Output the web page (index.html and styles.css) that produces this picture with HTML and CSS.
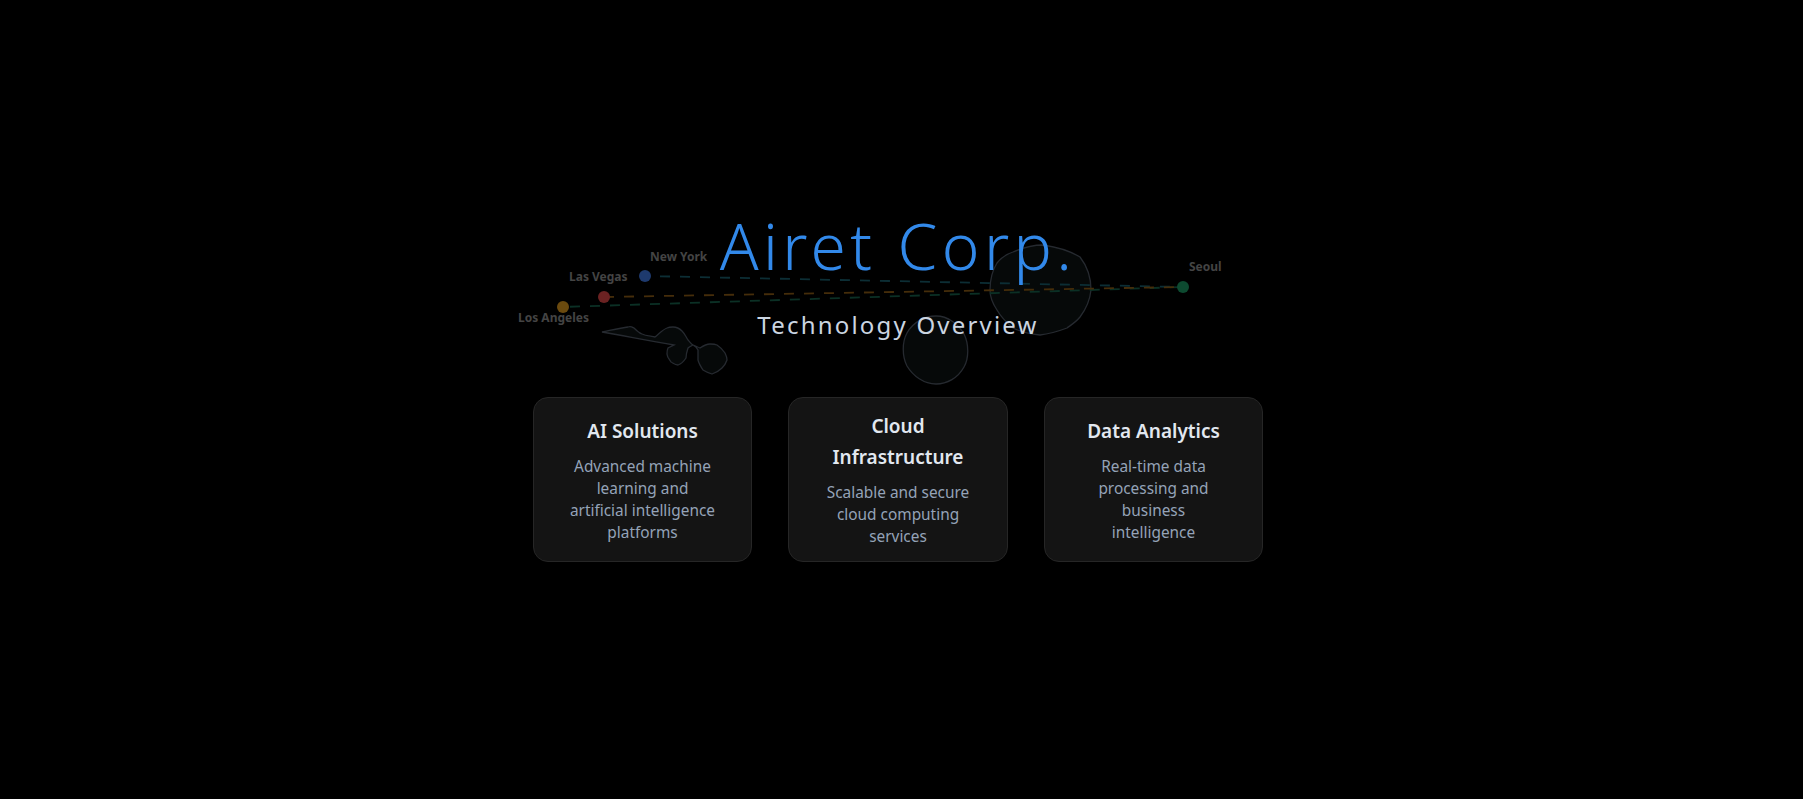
FILE: index.html
```html
<!DOCTYPE html>
<html>
  <head>
    <meta charset="utf-8">
    <title>Airet Corp.</title>
    <link rel="stylesheet" href="styles.css">
  </head>
  <body>
    <svg class="map" width="1803" height="799" viewBox="0 0 1803 799">
      <g class="land">
        <path d="M602 332 C612 330 621 328 628 327 C631 326 632 327 634 328 C637 331 639 333 642 334 C646 336 651 336 655 337 C659 334 662 330 667 328 C669 327 671 327 673 327 C677 327 680 329 682 331 C685 334 686 337 688 340 C690 342 691 344 693 345 C695 346 698 347 700 348 C703 346 707 344 710 344 C713 344 715 344 717 345 C720 347 723 350 725 353 C726 355 727 358 727 360 C726 363 724 366 722 368 C719 371 715 373 712 374 C709 373 706 372 703 370 C701 367 699 364 698 360 C698 357 698 353 698 350 C697 348 695 346 693 345 C691 346 689 347 688 348 C687 351 686 355 686 358 C684 361 681 364 678 365 C675 365 673 363 671 362 C669 359 667 357 667 354 C667 352 667 350 668 348 C670 347 672 346 674 345 C650 341 625 336 602 332 Z" />
        <path d="M1043 245 C1057 247 1070 251 1080 257 C1087 266 1091 278 1091 290 C1090 300 1086 309 1080 317 C1076 322 1071 325 1067 328 C1059 331 1049 334 1040 335 C1031 334 1021 332 1013 328 C1007 323 1001 317 997 310 C993 304 990 297 990 290 C990 280 992 271 997 263 C1001 258 1007 254 1013 252 C1022 248 1033 245 1043 245 Z" />
        <path d="M936 316 C948 316 958 324 964 334 C969 344 969 358 964 367 C958 378 947 384 936 384 C924 384 913 376 907 366 C902 356 902 342 907 333 C913 322 925 316 936 316 Z" />
      </g>
      <g class="routes">
        <line class="route-ny" x1="645" y1="276" x2="1183" y2="287" />
        <line class="route-la" x1="563" y1="307" x2="1183" y2="287" />
        <line class="route-lv" x1="604" y1="297" x2="1183" y2="287" />
      </g>
      <g class="pins">
        <circle class="pin-ny" cx="645" cy="276" r="6" />
        <circle class="pin-lv" cx="604" cy="297" r="6" />
        <circle class="pin-la" cx="563" cy="307" r="6" />
        <circle class="pin-se" cx="1183" cy="287" r="6" />
      </g>
      <g class="labels">
        <text x="650" y="261">New York</text>
        <text x="569" y="281">Las Vegas</text>
        <text x="518" y="322">Los Angeles</text>
        <text x="1189" y="271">Seoul</text>
      </g>
    </svg>

    <main class="page">
      <h1 class="title">Airet Corp.</h1>
      <h2 class="subtitle">Technology Overview</h2>
      <div class="cards">
        <div class="card">
          <h3>AI Solutions</h3>
          <p>Advanced machine learning and artificial intelligence platforms</p>
        </div>
        <div class="card">
          <h3>Cloud Infrastructure</h3>
          <p>Scalable and secure cloud computing services</p>
        </div>
        <div class="card">
          <h3>Data Analytics</h3>
          <p>Real-time data processing and business intelligence</p>
        </div>
      </div>
    </main>
  </body>
</html>
```

FILE: styles.css
```css
* {
  box-sizing: border-box;
  margin: 0;
  padding: 0;
}
html, body {
  background: #000;
  height: 100%;
  overflow: hidden;
}
body {
  font-family: "Noto Sans", "Open Sans", sans-serif;
  position: relative;
}
.map {
  position: absolute;
  left: 0;
  top: 0;
}
.land path {
  fill: #060909;
  stroke: #262a30;
  stroke-width: 1.3;
}
.routes line {
  stroke-width: 1.8;
  stroke-dasharray: 10 10;
}
.route-ny { stroke: #0c2e35; stroke-dashoffset: 5; }
.route-lv { stroke: #452d0a; }
.route-la { stroke: #0b3025; stroke-dashoffset: 13; }
.pin-ny { fill: #1e3a6e; }
.pin-lv { fill: #6b2222; }
.pin-la { fill: #6b4a0e; }
.pin-se { fill: #0d4a30; }
.labels text {
  font-size: 12px;
  font-weight: 700;
  fill: #444;
}
.page {
  position: relative;
  width: 1796px;
  display: flex;
  flex-direction: column;
  align-items: center;
  padding-top: 202px;
}
.title {
  font-size: 64px;
  font-weight: 300;
  line-height: 88px;
  letter-spacing: 4.4px;
  color: #3289ea;
}
.subtitle {
  font-size: 24px;
  font-weight: 400;
  line-height: 32px;
  letter-spacing: 2.2px;
  color: #cbd5e1;
  margin-top: 19px;
}
.cards {
  display: flex;
  gap: 36px;
  margin-top: 56px;
}
.card {
  width: 219.5px;
  height: 165px;
  padding: 0 35px;
  background: #141414;
  border: 1px solid #262626;
  border-radius: 15px;
  display: flex;
  flex-direction: column;
  justify-content: center;
  text-align: center;
}
.card h3 {
  font-size: 19px;
  font-weight: 600;
  line-height: 31px;
  color: #e2e8f0;
  margin-bottom: 9px;
}
.card p {
  font-size: 15.4px;
  line-height: 22px;
  color: #94a3b8;
}
```
